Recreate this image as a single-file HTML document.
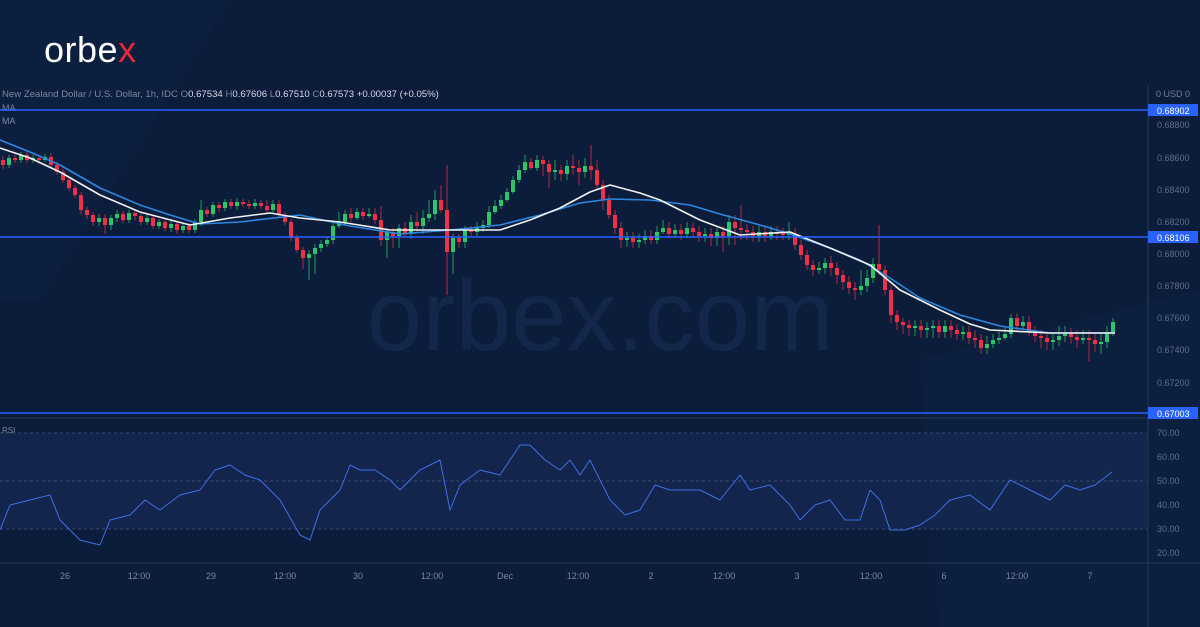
<!DOCTYPE html>
<html><head><meta charset="utf-8"><style>
html,body{margin:0;padding:0;background:#0b1d3a;width:1200px;height:627px;overflow:hidden;font-family:"Liberation Sans",sans-serif}
svg{position:absolute;left:0;top:0}
</style></head><body>
<svg width="1200" height="627" xmlns="http://www.w3.org/2000/svg">
<rect width="1200" height="627" fill="#0b1d3a"/>
<polygon points="0,0 230,0 40,300 0,300" fill="#0e2242" opacity="0.6"/>
<polygon points="920,360 1200,290 1200,627 940,627" fill="#0e2242" opacity="0.5"/>
<text x="600" y="350" font-size="100" fill="#12274a" text-anchor="middle" font-family="Liberation Sans,sans-serif">orbex.com</text>
<text x="44" y="62" font-size="36" fill="#ffffff" font-family="Liberation Sans,sans-serif" letter-spacing="0.5">orbe<tspan fill="#e8293a">x</tspan></text>
<text x="2" y="97" font-size="9.6" fill="#7b879c">New Zealand Dollar / U.S. Dollar, 1h, IDC  O<tspan fill="#d8d8e8">0.67534</tspan>  H<tspan fill="#d8d8e8">0.67606</tspan>  L<tspan fill="#d8d8e8">0.67510</tspan>  C<tspan fill="#d8d8e8">0.67573</tspan>  <tspan fill="#d8d8e8">+0.00037 (+0.05%)</tspan></text>
<text x="2" y="111" font-size="9" fill="#7b879c">MA</text>
<text x="2" y="124" font-size="9" fill="#7b879c">MA</text>
<rect x="0" y="433" width="1147" height="96" fill="#14274f" opacity="0.9"/>
<line x1="0" y1="433" x2="1147" y2="433" stroke="#4a5a78" stroke-dasharray="3,3" stroke-width="0.8"/>
<line x1="0" y1="481" x2="1147" y2="481" stroke="#4a5a78" stroke-dasharray="3,3" stroke-width="0.8"/>
<line x1="0" y1="529" x2="1147" y2="529" stroke="#4a5a78" stroke-dasharray="3,3" stroke-width="0.8"/>
<line x1="0" y1="418" x2="1148" y2="418" stroke="#2a3a58" stroke-width="1"/>
<line x1="0" y1="563" x2="1200" y2="563" stroke="#2a3a58" stroke-width="1"/>
<line x1="1148" y1="85" x2="1148" y2="627" stroke="#2a3a58" stroke-width="1"/>
<text x="2" y="433" font-size="8" fill="#7b879c">RSI</text>

<path stroke="#1f9a55" stroke-width="1" fill="none" d="M9 155v13M21 152v11M33 155v8M45 154v8M99 214v12M111 215v15M117 210v12M129 210v13M147 215v10M159 219v10M171 220v12M183 223v10M195 219v14M201 200v26M213 202v15M225 199v12M237 198v12M255 199v10M273 200v13M309 250v30M315 244v30M321 240v12M327 237v10M333 222v22M339 212v16M345 210v14M357 208v12M369 208v10M387 228v30M399 224v24M411 215v24M423 210v24M429 200v22M435 190v30M453 234v40M465 226v22M477 222v14M483 220v12M489 206v22M495 200v14M501 195v14M507 188v14M513 176v18M519 165v18M525 155v18M537 155v16M555 160v20M567 160v20M585 158v20M627 232v15M639 234v14M645 230v14M657 226v18M663 220v14M675 224v14M687 222v16M705 228v14M717 226v20M729 215v30M759 226v16M771 226v14M789 222v18M819 262v12M825 258v16M861 270v25M867 270v22M873 258v25M915 320v16M927 322v16M933 320v18M945 320v18M963 326v14M987 336v18M993 334v14M999 332v12M1005 326v14M1011 314v24M1023 316v14M1053 334v16M1059 326v20M1065 326v16M1083 330v14M1101 334v20M1107 326v22M1113 318v18"/>
<path stroke="#b02a40" stroke-width="1" fill="none" d="M3 156v13M15 155v8M27 152v11M39 156v8M51 153v15M57 162v13M63 169v14M69 177v14M75 185v13M81 192v22M87 207v12M93 212v14M105 214v20M123 211v12M135 210v10M141 213v12M153 215v14M165 219v12M177 221v13M189 223v10M207 207v10M219 202v10M231 199v10M243 199v8M249 200v9M261 200v9M267 200v13M279 200v18M285 212v13M291 219v22M297 235v18M303 247v22M351 208v14M363 208v12M375 208v16M381 206v40M393 228v20M405 222v14M417 212v20M441 185v28M447 165v130M459 234v14M471 226v10M531 158v12M543 156v20M549 160v28M561 165v16M573 155v20M579 160v25M591 145v35M597 160v30M603 180v30M609 195v24M615 210v24M621 222v26M633 232v16M651 230v14M669 222v16M681 224v16M693 222v16M699 226v16M711 228v18M723 226v26M735 215v30M741 205v35M747 224v16M753 226v16M765 226v16M777 226v14M783 228v12M795 228v22M801 240v20M807 250v20M813 260v16M831 256v20M837 262v22M843 270v20M849 276v18M855 282v18M879 225v50M885 265v30M891 285v38M897 310v20M903 318v16M909 320v16M921 320v18M939 320v18M951 320v18M957 324v16M969 326v18M975 330v18M981 334v20M1017 313v18M1029 316v20M1035 326v16M1041 330v18M1047 332v18M1071 328v16M1077 330v18M1089 330v32M1095 334v18"/>
<path fill="#2ec46b" d="M7 158h4v7h-4zM19 155h4v5h-4zM31 158h4v2h-4zM43 157h4v3h-4zM97 218h4v4h-4zM109 218h4v7h-4zM115 214h4v4h-4zM127 213h4v7h-4zM145 218h4v4h-4zM157 222h4v4h-4zM169 224h4v4h-4zM181 226h4v4h-4zM193 222h4v8h-4zM199 210h4v12h-4zM211 205h4v9h-4zM223 202h4v6h-4zM235 202h4v4h-4zM253 203h4v3h-4zM271 204h4v6h-4zM307 254h4v4h-4zM313 248h4v6h-4zM319 244h4v4h-4zM325 240h4v4h-4zM331 226h4v14h-4zM337 222h4v4h-4zM343 214h4v8h-4zM355 212h4v6h-4zM367 214h4v2h-4zM385 232h4v8h-4zM397 228h4v8h-4zM409 222h4v12h-4zM421 218h4v8h-4zM427 214h4v4h-4zM433 200h4v14h-4zM451 238h4v14h-4zM463 230h4v12h-4zM475 228h4v4h-4zM481 225h4v3h-4zM487 212h4v13h-4zM493 206h4v6h-4zM499 200h4v6h-4zM505 192h4v8h-4zM511 180h4v12h-4zM517 170h4v10h-4zM523 162h4v8h-4zM535 160h4v8h-4zM553 170h4v2h-4zM565 166h4v8h-4zM583 166h4v6h-4zM625 238h4v2h-4zM637 240h4v2h-4zM643 236h4v4h-4zM655 232h4v8h-4zM661 228h4v4h-4zM673 230h4v4h-4zM685 228h4v6h-4zM703 234h4v2h-4zM715 232h4v6h-4zM727 222h4v14h-4zM757 232h4v4h-4zM769 232h4v4h-4zM787 233h4v2h-4zM817 268h4v2h-4zM823 263h4v5h-4zM859 286h4v4h-4zM865 278h4v8h-4zM871 264h4v14h-4zM913 326h4v2h-4zM925 328h4v2h-4zM931 326h4v2h-4zM943 326h4v6h-4zM961 332h4v2h-4zM985 344h4v4h-4zM991 340h4v4h-4zM997 338h4v2h-4zM1003 334h4v4h-4zM1009 318h4v16h-4zM1021 322h4v4h-4zM1051 340h4v2h-4zM1057 336h4v4h-4zM1063 334h4v2h-4zM1081 338h4v2h-4zM1099 342h4v2h-4zM1105 332h4v10h-4zM1111 322h4v10h-4z"/>
<path fill="#ef3049" d="M1 160h4v5h-4zM13 158h4v2h-4zM25 155h4v5h-4zM37 158h4v2h-4zM49 157h4v8h-4zM55 165h4v7h-4zM61 172h4v8h-4zM67 180h4v8h-4zM73 188h4v7h-4zM79 195h4v15h-4zM85 210h4v5h-4zM91 215h4v7h-4zM103 218h4v7h-4zM121 214h4v6h-4zM133 213h4v3h-4zM139 216h4v6h-4zM151 218h4v8h-4zM163 222h4v6h-4zM175 224h4v6h-4zM187 226h4v4h-4zM205 210h4v4h-4zM217 205h4v3h-4zM229 202h4v4h-4zM241 202h4v2h-4zM247 204h4v2h-4zM259 203h4v3h-4zM265 206h4v4h-4zM277 204h4v11h-4zM283 215h4v7h-4zM289 222h4v16h-4zM295 238h4v12h-4zM301 250h4v8h-4zM349 214h4v4h-4zM361 212h4v4h-4zM373 214h4v6h-4zM379 220h4v20h-4zM391 232h4v4h-4zM403 228h4v6h-4zM415 222h4v4h-4zM439 200h4v10h-4zM445 210h4v42h-4zM457 238h4v4h-4zM469 230h4v2h-4zM529 162h4v6h-4zM541 160h4v4h-4zM547 164h4v8h-4zM559 170h4v4h-4zM571 166h4v2h-4zM577 168h4v4h-4zM589 166h4v4h-4zM595 170h4v15h-4zM601 185h4v15h-4zM607 200h4v15h-4zM613 215h4v13h-4zM619 228h4v12h-4zM631 238h4v4h-4zM649 236h4v4h-4zM667 228h4v6h-4zM679 230h4v4h-4zM691 228h4v4h-4zM697 232h4v4h-4zM709 234h4v4h-4zM721 232h4v4h-4zM733 222h4v6h-4zM739 228h4v2h-4zM745 230h4v2h-4zM751 232h4v4h-4zM763 232h4v4h-4zM775 232h4v2h-4zM781 233h4v2h-4zM793 234h4v11h-4zM799 245h4v10h-4zM805 255h4v10h-4zM811 265h4v5h-4zM829 263h4v5h-4zM835 268h4v7h-4zM841 275h4v7h-4zM847 282h4v6h-4zM853 288h4v2h-4zM877 264h4v6h-4zM883 270h4v20h-4zM889 290h4v25h-4zM895 315h4v7h-4zM901 322h4v3h-4zM907 325h4v3h-4zM919 326h4v4h-4zM937 326h4v6h-4zM949 326h4v4h-4zM955 330h4v4h-4zM967 332h4v6h-4zM973 338h4v2h-4zM979 340h4v8h-4zM1015 318h4v8h-4zM1027 322h4v10h-4zM1033 332h4v4h-4zM1039 336h4v2h-4zM1045 338h4v4h-4zM1069 334h4v3h-4zM1075 337h4v3h-4zM1087 338h4v2h-4zM1093 340h4v4h-4z"/>

<polyline fill="none" stroke="#2d86e0" stroke-width="1.6" stroke-linejoin="round" points="0,140 30,152 60,165 100,188 140,205 170,215 200,224 240,222 300,215 350,226 400,234 450,230 500,225 540,215 580,203 610,199 650,200 690,205 720,214 760,225 790,234 830,248 860,260 890,278 920,298 960,315 1000,326 1050,333 1115,333"/>
<polyline fill="none" stroke="#f2f2f2" stroke-width="1.6" stroke-linejoin="round" points="0,148 30,158 60,172 100,195 140,212 190,225 230,218 270,213 300,218 340,222 390,230 430,230 470,230 500,230 530,220 560,208 590,192 610,185 640,193 660,200 700,220 740,235 790,232 830,248 870,265 900,290 940,310 970,324 990,330 1050,333 1115,333"/>
<polyline fill="none" stroke="#3f6fe8" stroke-width="1" stroke-linejoin="round" points="0,530 10,505 30,500 50,495 60,520 80,540 100,545 110,520 130,515 145,500 160,510 180,495 200,490 215,470 230,465 245,475 260,480 280,500 300,535 310,540 320,510 340,490 350,465 360,470 375,470 390,480 400,490 420,470 440,460 450,510 460,485 480,470 500,475 510,460 520,445 530,445 545,460 560,470 570,460 580,475 590,460 600,480 610,500 625,515 640,510 655,485 670,490 700,490 720,500 740,475 750,490 770,485 790,505 800,520 815,505 830,500 845,520 860,520 870,490 880,500 890,530 905,530 920,525 935,515 950,500 970,495 990,510 1010,480 1030,490 1050,500 1065,485 1080,490 1095,485 1112,472"/>

<line x1="0" y1="110" x2="1148" y2="110" stroke="#2962ff" stroke-width="1.5"/>
<line x1="0" y1="237" x2="1148" y2="237" stroke="#2962ff" stroke-width="1.5"/>
<line x1="0" y1="413" x2="1148" y2="413" stroke="#2962ff" stroke-width="1.5"/>
<g font-size="9" fill="#5f6f8c" font-family="Liberation Sans,sans-serif">
<text x="1156" y="97" fill="#6f7f9c">0 USD 0</text>
<text x="1157" y="128">0.68800</text><text x="1157" y="161">0.68600</text><text x="1157" y="193">0.68400</text><text x="1157" y="225">0.68200</text><text x="1157" y="257">0.68000</text><text x="1157" y="289">0.67800</text><text x="1157" y="321">0.67600</text><text x="1157" y="353">0.67400</text><text x="1157" y="386">0.67200</text>
<text x="1157" y="436">70.00</text><text x="1157" y="460">60.00</text><text x="1157" y="484">50.00</text><text x="1157" y="508">40.00</text><text x="1157" y="532">30.00</text><text x="1157" y="556">20.00</text>
</g>
<rect x="1148" y="104" width="50" height="12" fill="#2962ff"/><text x="1157" y="114" font-size="9" fill="#fff">0.68902</text>
<rect x="1148" y="231" width="50" height="12" fill="#2962ff"/><text x="1157" y="241" font-size="9" fill="#fff">0.68106</text>
<rect x="1148" y="407" width="50" height="12" fill="#2962ff"/><text x="1157" y="417" font-size="9" fill="#fff">0.67003</text>
<g font-size="9" fill="#7b879c" text-anchor="middle">
<text x="65" y="579">26</text><text x="139" y="579">12:00</text><text x="211" y="579">29</text><text x="285" y="579">12:00</text><text x="358" y="579">30</text><text x="432" y="579">12:00</text><text x="505" y="579">Dec</text><text x="578" y="579">12:00</text><text x="651" y="579">2</text><text x="724" y="579">12:00</text><text x="797" y="579">3</text><text x="871" y="579">12:00</text><text x="944" y="579">6</text><text x="1017" y="579">12:00</text><text x="1090" y="579">7</text>
</g>
</svg>
</body></html>
